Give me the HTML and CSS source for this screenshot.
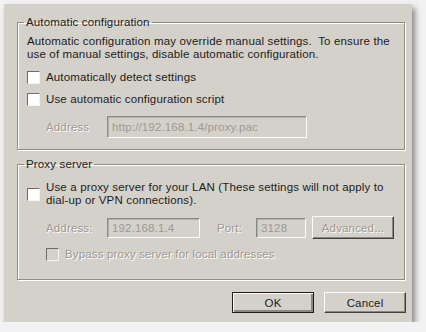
FILE: index.html
```html
<!DOCTYPE html>
<html lang="en">
<head>
    <meta charset="UTF-8">
    <title>Local Area Network (LAN) Settings</title>
    <link rel="stylesheet" href="styles.css">
</head>
<body>
    <div class="dialog">
        <fieldset class="group group-auto">
            <legend>Automatic configuration</legend>
            <p class="desc">Automatic configuration may override manual settings.&nbsp; To ensure the<br>use of manual settings, disable automatic configuration.</p>

            <label class="check-row first">
                <span class="checkbox"></span>
                <span>Automatically detect settings</span>
            </label>
            <label class="check-row">
                <span class="checkbox"></span>
                <span>Use automatic configuration script</span>
            </label>

            <div class="field-row indent">
                <span class="field-label disabled">Address</span>
                <span class="textbox wide">http://192.168.1.4/proxy.pac</span>
            </div>
        </fieldset>

        <fieldset class="group group-proxy">
            <legend>Proxy server</legend>
            <label class="check-row multi">
                <span class="checkbox"></span>
                <span>Use a proxy server for your LAN (These settings will not apply to<br>dial-up or VPN connections).</span>
            </label>

            <div class="field-row indent proxy-row">
                <span class="field-label disabled">Address:</span>
                <span class="textbox addr">192.168.1.4</span>
                <span class="port-label disabled">Port:</span>
                <span class="textbox port">3128</span>
                <button class="btn btn-advanced" disabled>Advanced...</button>
            </div>

            <label class="check-row indent bypass">
                <span class="checkbox off"></span>
                <span class="disabled">Bypass proxy server for local addresses</span>
            </label>
        </fieldset>

        <div class="actions">
            <button class="btn btn-default">OK</button>
            <button class="btn">Cancel</button>
        </div>
    </div>
</body>
</html>
```

FILE: styles.css
```css
body {
    margin: 0;
    background: #f2f2f2;
    font-family: 'Liberation Sans', Arial, sans-serif;
    font-size: 11.5px;
    letter-spacing: 0.15px;
    color: #1c1c1c;
}
.dialog {
    margin: 4px 0 0 4px;
    width: 408px;
    height: 318px;
    box-sizing: border-box;
    padding: 12px 7px 0 13px;
    background: #d4d1ca;
    box-shadow: 3px 4px 6px rgba(0, 0, 0, 0.45);
}
.group {
    margin: 0;
    padding: 0 9px 0 9px;
    border: 1px solid #8f8d88;
    box-shadow: 1px 1px 0 #fff, inset 1px 1px 0 #fff;
}
.group legend {
    margin-left: -3px;
    padding: 0 2px;
    line-height: 13px;
}
.group-auto {
    height: 134px;
    box-sizing: border-box;
}
.group-proxy {
    margin-top: 8px;
    height: 122px;
    box-sizing: border-box;
}
.desc {
    margin: 6px 0 0 0;
    line-height: 13px;
}
.check-row {
    display: flex;
    align-items: center;
    gap: 6px;
    height: 18px;
    margin-top: 4px;
}
.check-row.first {
    margin-top: 7px;
}
.check-row.multi {
    height: 26px;
    margin-top: 10px;
    line-height: 13px;
}
.check-row.bypass {
    margin-top: 6px;
}
.checkbox {
    flex: none;
    width: 11px;
    height: 11px;
    background: #fff;
    border: 1px solid;
    border-color: #6e6c68 #f4f4f2 #f4f4f2 #6e6c68;
}
.checkbox.off {
    background: #d4d1ca;
}
.indent {
    margin-left: 19px;
}
.field-row {
    display: flex;
    align-items: center;
    margin-top: 8px;
}
.proxy-row {
    margin-top: 9px;
}
.field-label {
    width: 61px;
}
.port-label {
    margin-left: 17px;
    width: 39px;
}
.disabled {
    color: #9c9a94;
    text-shadow: 1px 1px 0 #fff;
}
.textbox {
    box-sizing: border-box;
    height: 22px;
    line-height: 20px;
    padding: 0 4px;
    color: #9c9a94;
    background: #d4d1ca;
    border: 1px solid;
    border-color: #8a8884 #fbfbfa #fbfbfa #8a8884;
    box-shadow: inset 1px 1px 0 #b4b1ab;
}
.textbox.wide {
    width: 200px;
}
.textbox.addr {
    width: 93px;
    height: 20px;
    line-height: 18px;
}
.textbox.port {
    width: 50px;
    height: 20px;
    line-height: 18px;
}
.btn {
    box-sizing: border-box;
    width: 82px;
    height: 21px;
    padding: 0;
    font-family: inherit;
    font-size: 11.5px;
    letter-spacing: 0.15px;
    color: #1c1c1c;
    background: #d4d1ca;
    border: 1px solid;
    border-color: #fbfbfa #404040 #404040 #fbfbfa;
    box-shadow: inset -1px -1px 0 #8a8884;
}
.btn-advanced {
    margin-left: 6px;
    height: 23px;
    color: #9c9a94;
    text-shadow: 1px 1px 0 #fff;
}
.btn-default {
    border: 1px solid #1c1c1c;
    box-shadow: inset 1px 1px 0 #fbfbfa, inset -2px -2px 0 #8a8884;
}
.actions {
    display: flex;
    justify-content: flex-end;
    gap: 10px;
    margin-top: 12px;
    margin-right: -1px;
}
```
